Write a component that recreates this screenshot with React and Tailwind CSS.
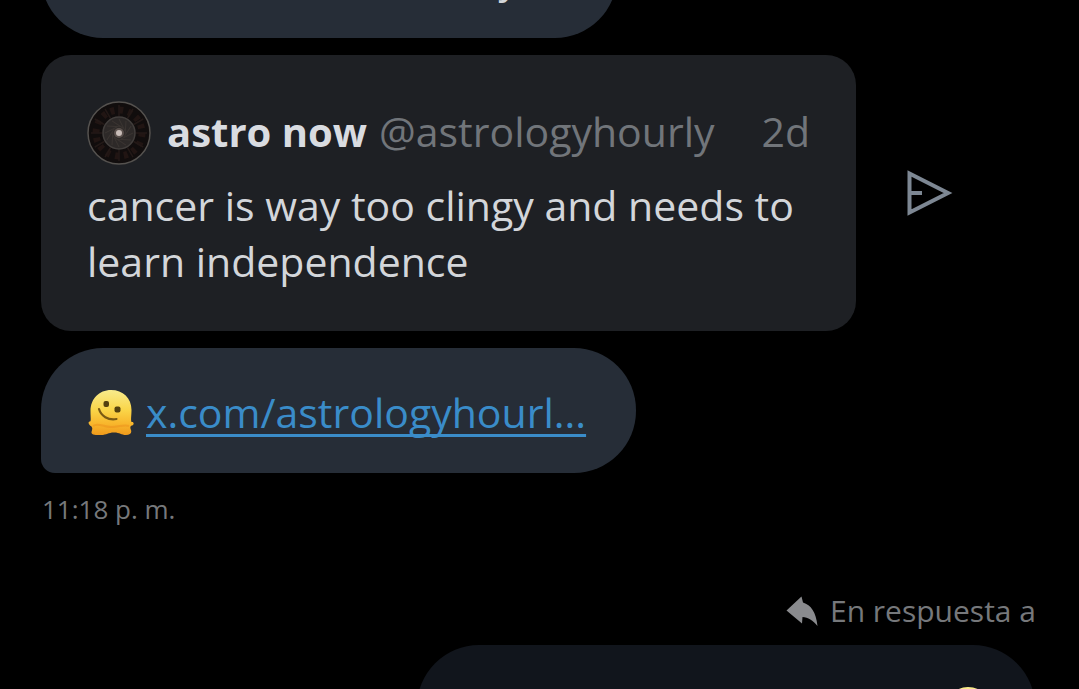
const font = "font-['Open_Sans','Noto_Sans',sans-serif]"

function MeltingFace({ className = '' }) {
  return (
    <svg viewBox="0 0 46 47" className={`shrink-0 w-[46px] h-[47px] ${className}`} role="img" aria-label="melting face">
      <defs>
        <linearGradient id="melt" x1="0" y1="0" x2="0" y2="1">
          <stop offset="0" stopColor="#f8eb8c" />
          <stop offset="0.45" stopColor="#fad548" />
          <stop offset="0.75" stopColor="#f8b62c" />
          <stop offset="1" stopColor="#ef9a1c" />
        </linearGradient>
      </defs>
      <path
        d="M23 1C35 1 43.500 9 43.500 21C43.500 27 42.500 31 43.500 33C46 32.500 46.500 35.500 44 36.500C42 37 42 39 43 41C44 44 42 46 38 46C33 46 32 43.500 26 43.500C20 43.500 19 46 13 46C8 46 3 46 3.500 43C4 41 5 39.500 3.500 37.500C1 36.500 -0.500 33 1.500 32.500C3.500 32.500 2.500 29 2.500 22C2.500 10 11 1 23 1Z"
        fill="url(#melt)"
      />
      <path d="M5 37C10 33 15 38 23 38S36 35 41 37" fill="none" stroke="#e8881a" strokeWidth="2" opacity="0.4" />
      <rect x="15.500" y="12" width="5.500" height="6" rx="2" fill="#54410f" />
      <rect x="26.500" y="17.500" width="6" height="6" rx="2" fill="#54410f" />
      <path d="M11 20C13 27 20 31.500 28.500 30" fill="none" stroke="#7a5a14" strokeWidth="2.200" strokeLinecap="round" />
    </svg>
  )
}

const spokes = Array.from({ length: 12 }, (_, i) => i * 30)

function Avatar() {
  return (
    <svg viewBox="0 0 64 64" className="size-16 shrink-0" role="img" aria-label="astro now">
      <circle cx="32" cy="32" r="31" fill="#110d0d" stroke="#55524f" strokeWidth="1.500" />
      <circle cx="32" cy="32" r="23" fill="none" stroke="#211513" strokeWidth="7" strokeDasharray="4 5" />
      {spokes.map((a) => (
        <path key={a} d="M32 4V15" stroke="#231917" strokeWidth="1.500" transform={`rotate(${a} 32 32)`} />
      ))}
      <circle cx="32" cy="32" r="16" fill="#2d2928" stroke="#423e3c" strokeWidth="1.500" />
      {spokes.map((a) => (
        <path key={a} d="M32 18L38 30" stroke="#3b3532" transform={`rotate(${a} 32 32)`} />
      ))}
      <circle cx="32" cy="32" r="5" fill="#5a504c" />
      <circle cx="32" cy="32" r="3" fill="#c9bdb8" />
    </svg>
  )
}

function ReplyIcon() {
  return (
    <svg viewBox="0 0 32 30" className="w-8 h-[30px]" fill="#8a8b8e" aria-hidden="true">
      <path d="M15.500 0.500L17 6.500C25 9 30 16 31.500 30C27 24 22 21.500 16.500 21L16 27.500L0.500 14.500Z" />
    </svg>
  )
}

function SharedPost() {
  return (
    <article className="flex-1 min-w-0 px-[46px] pt-[46px] pb-[42px] rounded-[30px] bg-[#1e2024]">
      <header className="flex items-center gap-4 text-[41px] leading-[52px]">
        <Avatar />
        <div className="flex flex-1 items-baseline gap-3 pb-1 whitespace-nowrap">
          <span className="text-[40px] font-bold text-[#d9dce1]">astro now</span>
          <span className="text-[#71757a]">@astrologyhourly</span>
          <time className="ml-auto text-[#71757a]">2d</time>
        </div>
      </header>
      <p className="mt-3 text-[41px] leading-14 text-[#d3d6da]">
        cancer is way too clingy and needs to learn independence
      </p>
    </article>
  )
}

export default function App() {
  return (
    <main className={`flex flex-col h-screen overflow-hidden bg-black ${font}`}>
      <div className="-mt-[87px] ml-[41px] flex shrink-0 self-start w-[576px] h-[125px] items-center justify-end rounded-[62px] bg-[#262d37] pt-1 pr-[98px] text-[41px] text-[#d3d6da]">
        y
      </div>

      <div className="mt-[17px] flex items-center gap-[49px] pl-[41px] pr-[126px]">
        <SharedPost />
        <button type="button" aria-label="Enviar" className="shrink-0">
          <svg viewBox="0 0 48 48" className="size-12" fill="none" stroke="#7d8793" strokeWidth="4">
            <path d="M4.500 4.500L43 24L4.500 43.500Z" />
            <path d="M5 24H17" />
          </svg>
        </button>
      </div>

      <div className="mt-[17px] ml-[41px] flex shrink-0 self-start h-[125px] items-center gap-3 rounded-[62px] rounded-bl-[14px] bg-[#262d37] pl-[47px] pr-[50px]">
        <MeltingFace className="mt-1" />
        <a
          href="#"
          className="mt-1 text-[41px] text-[#3a8cc9] underline decoration-3 underline-offset-[6px] [text-decoration-skip-ink:none]"
        >
          x.com/astrologyhourl...
        </a>
      </div>

      <time className="mt-4 ml-[42px] text-[26px] leading-10 text-[#76787b]">11:18 p. m.</time>

      <div className="mt-16 mr-[43px] flex items-center justify-end gap-3 text-[30px] leading-9 text-[#76787b]">
        <ReplyIcon />
        En respuesta a
      </div>

      <div className="mt-4 mr-11 flex shrink-0 self-end w-[618px] h-[125px] items-center justify-end rounded-[62px] bg-[#11151c] pr-11">
        <MeltingFace className="mt-1" />
      </div>
    </main>
  )
}
